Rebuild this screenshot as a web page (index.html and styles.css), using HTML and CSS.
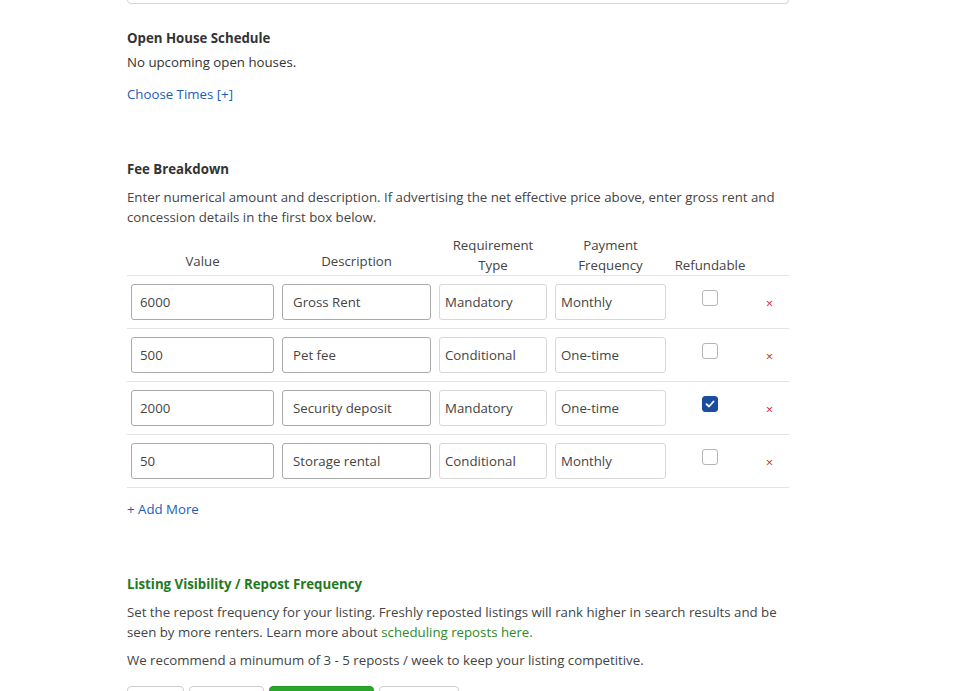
FILE: index.html
```html
<!DOCTYPE html>
<html>
	<head>
		<meta charset="utf-8" />
		<title>Listing details</title>
		<link rel="stylesheet" href="styles.css">
	</head>
	<body>
		<div class="page">
			<div class="prev-box"></div>

			<section class="open-house">
				<h3>Open House Schedule</h3>
				<p class="empty">No upcoming open houses.</p>
				<a class="link" href="#">Choose Times [+]</a>
			</section>

			<section class="fees">
				<h3>Fee Breakdown</h3>
				<p class="note">Enter numerical amount and description. If advertising the net effective price above, enter gross rent and concession details in the first box below.</p>

				<table class="fee-table" cellspacing="0" cellpadding="0">
					<colgroup>
						<col class="c-value" />
						<col class="c-desc" />
						<col class="c-req" />
						<col class="c-freq" />
						<col class="c-ref" />
						<col class="c-del" />
					</colgroup>
					<tr>
						<th class="raised">Value</th>
						<th class="raised">Description</th>
						<th>Requirement<br />Type</th>
						<th>Payment<br />Frequency</th>
						<th>Refundable</th>
						<th></th>
					</tr>
					<tr>
						<td><input class="field" type="text" value="6000" /></td>
						<td><input class="field desc" type="text" value="Gross Rent" /></td>
						<td><div class="select">Mandatory</div></td>
						<td><div class="select">Monthly</div></td>
						<td class="check-cell"><span class="check"></span></td>
						<td class="del-cell"><a class="del" href="#">&times;</a></td>
					</tr>
					<tr>
						<td><input class="field" type="text" value="500" /></td>
						<td><input class="field desc" type="text" value="Pet fee" /></td>
						<td><div class="select">Conditional</div></td>
						<td><div class="select">One-time</div></td>
						<td class="check-cell"><span class="check"></span></td>
						<td class="del-cell"><a class="del" href="#">&times;</a></td>
					</tr>
					<tr>
						<td><input class="field" type="text" value="2000" /></td>
						<td><input class="field desc" type="text" value="Security deposit" /></td>
						<td><div class="select">Mandatory</div></td>
						<td><div class="select">One-time</div></td>
						<td class="check-cell">
							<span class="check checked">
								<svg width="10" height="8" viewBox="0 0 10 8"><path d="M1.5 4.2 L4 6.5 L8.5 1.5" fill="none" stroke="#fff" stroke-width="1.8" stroke-linecap="round" stroke-linejoin="round"/></svg>
							</span>
						</td>
						<td class="del-cell"><a class="del" href="#">&times;</a></td>
					</tr>
					<tr>
						<td><input class="field" type="text" value="50" /></td>
						<td><input class="field desc" type="text" value="Storage rental" /></td>
						<td><div class="select">Conditional</div></td>
						<td><div class="select">Monthly</div></td>
						<td class="check-cell"><span class="check"></span></td>
						<td class="del-cell"><a class="del" href="#">&times;</a></td>
					</tr>
				</table>

				<a class="link add-more" href="#">+ Add More</a>
			</section>

			<section class="visibility">
				<h3 class="green">Listing Visibility / Repost Frequency</h3>
				<p class="note">Set the repost frequency for your listing. Freshly reposted listings will rank higher in search results and be seen by more renters. Learn more about <a class="green-link" href="#">scheduling reposts here.</a></p>
				<p class="note">We recommend a minumum of 3 - 5 reposts / week to keep your listing competitive.</p>

				<div class="freq-buttons">
					<button class="freq w-none">Off</button>
					<button class="freq w-one">1 / wk</button>
					<button class="freq w-mid active">3 - 5 / wk</button>
					<button class="freq w-daily">Daily</button>
				</div>
			</section>
		</div>
	</body>
</html>
```

FILE: styles.css
```css
body {
	margin:0;
	background:#fff;
	font-family:"Open Sans", "Liberation Sans", sans-serif;
	font-size:13.25px;
	line-height:20px;
	color:#333;
}
.page {
	width:662px;
	margin-left:127px;
}
.prev-box {
	height:60px;
	margin-top:-58px;
	border:1px solid #d4d4d4;
	border-radius:4px;
}
h3 {
	margin:0;
	font-size:13.25px;
	font-weight:bold;
	color:#333;
}
p {
	margin:0;
}
.link {
	display:inline-block;
	color:#1d5db4;
	text-decoration:none;
}
.open-house {
	margin-top:24px;
}
.open-house .empty {
	margin-top:4px;
}
.open-house .link {
	margin-top:12px;
}
.fees {
	margin-top:55px;
}
.note {
	margin-top:8px;
	color:#444;
}
.fee-table {
	margin-top:8px;
	width:662px;
	table-layout:fixed;
	border-collapse:collapse;
}
.c-value { width:151px; }
.c-desc { width:157px; }
.c-req { width:116px; }
.c-freq { width:119px; }
.c-ref { width:80px; }
.c-del { width:39px; }
th {
	font-weight:normal;
	color:#444;
	vertical-align:bottom;
	padding:0;
	border-bottom:1px solid #e3e3e3;
	text-align:center;
}
th.raised {
	padding-bottom:4px;
}
td {
	padding:8px 4px;
	border-bottom:1px solid #e3e3e3;
	vertical-align:top;
}
.field {
	display:block;
	box-sizing:border-box;
	width:100%;
	height:36px;
	margin:0;
	padding:0 8px;
	border:1px solid #aaa;
	border-radius:3px;
	font-family:inherit;
	font-size:13.25px;
	color:#444;
	background:#fff;
}
.field.desc {
	padding-left:10px;
}
.select {
	box-sizing:border-box;
	height:36px;
	padding:7px 5px;
	border:1px solid #d8d8d8;
	border-radius:3px;
	color:#444;
}
.check-cell {
	text-align:center;
	padding-top:14px;
	line-height:0;
}
.check {
	display:inline-flex;
	vertical-align:top;
	align-items:center;
	justify-content:center;
	box-sizing:border-box;
	width:16px;
	height:16px;
	border:1px solid #b5b5b5;
	border-radius:3px;
	background:#fff;
}
.check.checked {
	background:#1b4d9e;
	border-color:#1b4d9e;
}
.del-cell {
	text-align:center;
	padding-top:17px;
}
.del {
	color:#c9302c;
	text-decoration:none;
	font-size:13px;
}
.add-more {
	margin-top:11px;
}
.visibility {
	margin-top:55px;
}
.green {
	color:#1f7a1f;
}
.green-link {
	color:#2b8a2b;
	text-decoration:none;
}
.freq-buttons {
	display:flex;
	gap:5px;
	margin-top:16px;
}
.freq {
	height:36px;
	padding:14px 0 0;
	border:1px solid #ccc;
	border-radius:4px;
	background:#fff;
	font-family:inherit;
	font-size:13px;
	color:#333;
}
.w-none { width:57px; }
.w-one { width:75px; }
.w-mid { width:105px; }
.w-daily { width:80px; }
.freq.active {
	background:#2ba52b;
	border-color:#229922;
	color:#fff;
}
```
